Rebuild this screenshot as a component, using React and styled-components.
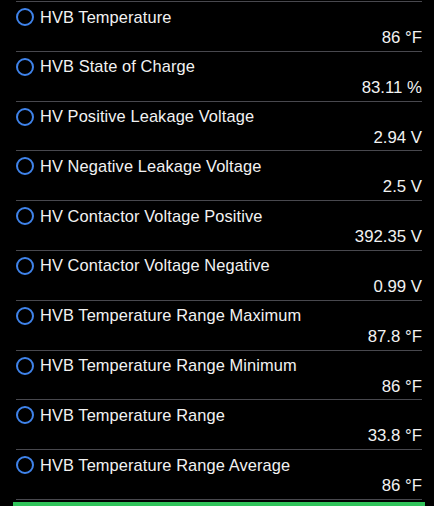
import React from "react";
import styled, { createGlobalStyle } from "styled-components";

const GlobalStyle = createGlobalStyle`
  html, body {
    margin: 0;
    padding: 0;
    background: #000;
  }
  body {
    font-family: "Liberation Sans", Arial, sans-serif;
    -webkit-font-smoothing: antialiased;
  }
`;

const items = [
  { title: "HVB Temperature", value: "86 °F" },
  { title: "HVB State of Charge", value: "83.11 %" },
  { title: "HV Positive Leakage Voltage", value: "2.94 V" },
  { title: "HV Negative Leakage Voltage", value: "2.5 V" },
  { title: "HV Contactor Voltage Positive", value: "392.35 V" },
  { title: "HV Contactor Voltage Negative", value: "0.99 V" },
  { title: "HVB Temperature Range Maximum", value: "87.8 °F" },
  { title: "HVB Temperature Range Minimum", value: "86 °F" },
  { title: "HVB Temperature Range", value: "33.8 °F" },
  { title: "HVB Temperature Range Average", value: "86 °F" },
];

const App = () => {
  return (
    <Screen>
      <GlobalStyle />
      <List>
        {items.map((item) => (
          <Row key={item.title}>
            <TitleLine>
              <Radio />
              <Title>{item.title}</Title>
            </TitleLine>
            <Value>{item.value}</Value>
          </Row>
        ))}
        <Divider />
      </List>
      <GreenBar />
    </Screen>
  );
};

export default App;

const Screen = styled.div`
  width: 434px;
  height: 506px;
  background: #000;
  overflow: hidden;
  padding-top: 1px;
  box-sizing: border-box;
`;

const List = styled.div`
  display: flex;
  flex-direction: column;
  margin: 0 12px 0 16px;
`;

const Row = styled.div`
  height: 49.8px;
  box-sizing: border-box;
  border-top: 1px solid #48484e;
  display: flex;
  flex-direction: column;
`;

const Divider = styled.div`
  border-top: 1px solid #48484e;
`;

const TitleLine = styled.div`
  display: flex;
  align-items: center;
  height: 30px;
  gap: 6px;
`;

const Radio = styled.span`
  width: 14px;
  height: 14px;
  border: 2.5px solid #3f83ea;
  border-radius: 50%;
  flex-shrink: 0;
`;

const Title = styled.span`
  color: #f2f2f2;
  font-size: 16.4px;
  letter-spacing: 0.1px;
`;

const Value = styled.div`
  color: #f2f2f2;
  font-size: 16.8px;
  text-align: right;
  line-height: 12px;
`;

const GreenBar = styled.div`
  height: 4px;
  margin: 2px 9px 0 13px;
  background: #30c35a;
`;
